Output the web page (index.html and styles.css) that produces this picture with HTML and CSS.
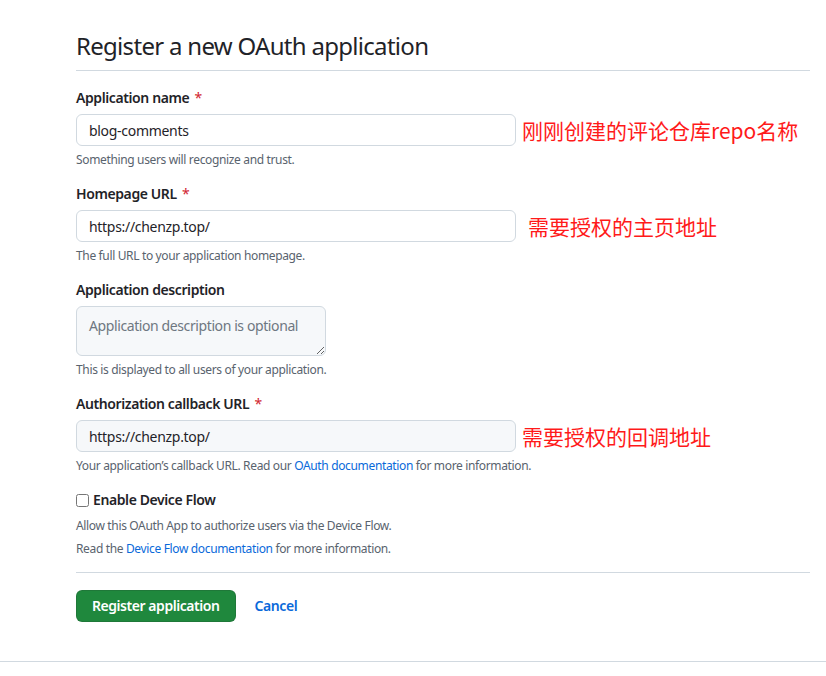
FILE: index.html
```html
<!DOCTYPE html>
<html lang="en">
<head>
<meta charset="utf-8">
<title>Register a new OAuth application</title>
<link rel="stylesheet" href="styles.css">
</head>
<body>
<main class="page">
  <div class="container">
    <h2 class="title">Register a new OAuth application</h2>
    <form class="form">
      <div class="group">
        <label class="label">Application name <span class="req">*</span></label>
        <div class="row">
          <input class="input" type="text" value="blog-comments">
          <span class="note-red">刚刚创建的评论仓库repo名称</span>
        </div>
        <p class="hint">Something users will recognize and trust.</p>
      </div>
      <div class="group">
        <label class="label">Homepage URL <span class="req">*</span></label>
        <div class="row">
          <input class="input" type="text" value="https://chenzp.top/">
          <span class="note-red note-wide">需要授权的主页地址</span>
        </div>
        <p class="hint">The full URL to your application homepage.</p>
      </div>
      <div class="group">
        <label class="label">Application description</label>
        <textarea class="textarea" placeholder="Application description is optional"></textarea>
        <p class="hint">This is displayed to all users of your application.</p>
      </div>
      <div class="group">
        <label class="label">Authorization callback URL <span class="req">*</span></label>
        <div class="row">
          <input class="input input-gray" type="text" value="https://chenzp.top/">
          <span class="note-red">需要授权的回调地址</span>
        </div>
        <p class="hint">Your application’s callback URL. Read our <a class="link" href="#">OAuth documentation</a> for more information.</p>
      </div>
      <div class="device">
        <label class="check-label"><input class="check" type="checkbox"> Enable Device Flow</label>
        <p class="hint hint-device">Allow this OAuth App to authorize users via the Device Flow.</p>
        <p class="hint hint-device2">Read the <a class="link" href="#">Device Flow documentation</a> for more information.</p>
      </div>
      <div class="actions">
        <button class="btn-primary" type="button">Register application</button>
        <a class="cancel" href="#">Cancel</a>
      </div>
    </form>
  </div>
  <div class="footer-rule"></div>
</main>
</body>
</html>
```
FILE: styles.css
```css
* { box-sizing: border-box; }
html, body { margin: 0; padding: 0; background: #fff; }
body {
  font-family: "Noto Sans", "Open Sans", sans-serif;
  color: #1f2328;
  font-size: 14px;
  line-height: 20px;
  letter-spacing: -0.4px;
}
.container {
  margin-left: 76px;
  width: 734px;
  padding-top: 28px;
}
.title {
  margin: 0;
  font-size: 24px;
  font-weight: 400;
  line-height: 36px;
  letter-spacing: -0.7px;
  padding-bottom: 6px;
  border-bottom: 1px solid #d1d9e0;
}
.form { padding-top: 17px; }
.group { margin-bottom: 15px; }
.label {
  display: block;
  font-weight: 600;
  font-size: 14px;
  line-height: 20px;
  margin-bottom: 6px;
}
.req { color: #d1242f; font-weight: 400; margin-left: 2px; }
.row { display: flex; align-items: center; }
.input {
  width: 440px;
  height: 32px;
  border: 1px solid #d1d9e0;
  border-radius: 6px;
  padding: 0 12px;
  font: inherit;
  font-size: 14px;
  letter-spacing: -0.3px;
  color: #1f2328;
  background: #fff;
}
.input-gray { background: #f6f8fa; }
.note-red {
  margin-left: 6px;
  font-family: "Noto Sans CJK SC", sans-serif;
  font-size: 21px;
  line-height: 28px;
  letter-spacing: 0;
  color: #ff1a1a;
}
.note-wide { margin-left: 12px; }
.hint {
  margin: 5px 0 0;
  font-size: 12px;
  line-height: 18px;
  letter-spacing: -0.35px;
  color: #59636e;
}
.textarea {
  display: block;
  width: 250px;
  height: 50px;
  border: 1px solid #d1d9e0;
  border-radius: 6px;
  background: #f6f8fa;
  padding: 9px 12px 5px;
  font: inherit;
  font-size: 14px;
  line-height: 20px;
  letter-spacing: -0.4px;
  color: #1f2328;
}
.textarea::placeholder { color: #6e7781; }
.link { color: #0969da; text-decoration: none; }
.device { margin-top: 0; }
.check-label {
  display: flex;
  align-items: center;
  font-weight: 600;
  line-height: 20px;
}
.check {
  width: 13px;
  height: 13px;
  margin: 0 4px 0 0;
}
.hint-device { margin-top: 7px; }
.hint-device2 { margin-top: 5px; }
.actions {
  margin-top: 14px;
  border-top: 1px solid #d1d9e0;
  padding-top: 17px;
  display: flex;
  align-items: center;
}
.btn-primary {
  height: 32px;
  padding: 0 15px;
  border: 1px solid rgba(31, 35, 40, 0.15);
  border-radius: 6px;
  background: #1f883d;
  color: #fff;
  font: inherit;
  font-weight: 600;
  font-size: 14px;
  letter-spacing: -0.45px;
}
.cancel {
  margin-left: 19px;
  color: #0969da;
  font-weight: 600;
  text-decoration: none;
}
.footer-rule {
  margin-top: 39px;
  border-top: 1px solid #d1d9e0;
}
```
